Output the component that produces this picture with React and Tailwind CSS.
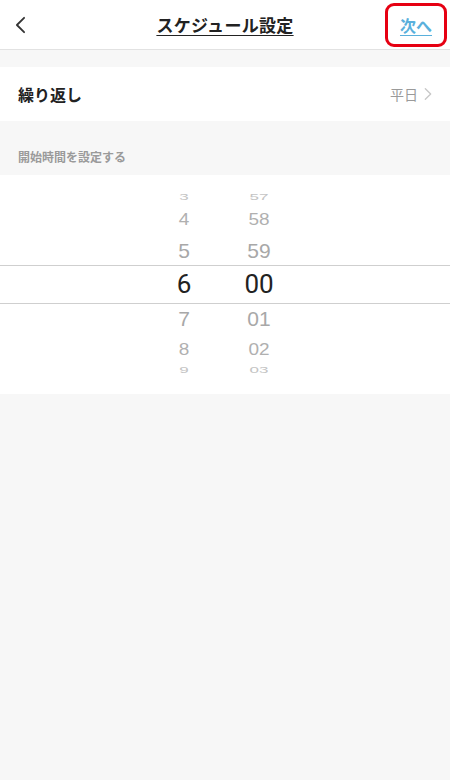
const font = { fontFamily: '"Noto Sans CJK JP", "Noto Sans", sans-serif' };
const digits = { fontFamily: '"Liberation Sans", Arial, sans-serif' };
const digitsMid = { fontFamily: 'Roboto, "Liberation Sans", sans-serif' };

function Chevron({ className }) {
  return (
    <svg viewBox="0 0 12 20" className={className} fill="none" stroke="currentColor" strokeWidth="2" strokeLinecap="round" strokeLinejoin="round">
      <path d="M10 2 L2 10 L10 18" />
    </svg>
  );
}

function PickerColumn({ values, width, rows }) {
  return (
    <div className={`flex flex-col items-center ${width}`}>
      {values.map((v, i) => (
        <div key={v} className={`flex items-center justify-center leading-none ${rows[i]}`} style={i === 3 ? digitsMid : digits}>
          {v}
        </div>
      ))}
    </div>
  );
}

export default function App() {
  const hours = ['3', '4', '5', '6', '7', '8', '9'];
  const mins = ['57', '58', '59', '00', '01', '02', '03'];

  // row styles from top to bottom of the wheel
  const rows = [
    'h-[15px] text-[17px] text-[#c4c4c4] scale-y-[0.5]',
    'h-[29px] text-[19px] text-[#b0b0b0] scale-y-[0.82]',
    'h-[32px] text-[21px] text-[#a8a8a8]',
    'h-[36px] text-[26px] text-[#222] font-normal',
    'h-[33px] text-[21px] text-[#a8a8a8]',
    'h-[28px] text-[19px] text-[#b0b0b0] scale-y-[0.82]',
    'h-[15px] text-[17px] text-[#c4c4c4] scale-y-[0.5]',
  ];

  return (
    <div className="min-h-[780px] bg-[#f7f7f7]" style={font}>
      <div className="relative flex h-[50px] items-center justify-center border-b border-[#e2e2e2] bg-white">
        <Chevron className="absolute left-[15px] top-[16px] h-[18px] w-[11px] text-[#333]" />
        <span className="text-[17px] font-bold tracking-[0.3px] text-[#222] underline underline-offset-[3px]">スケジュール設定</span>
        <div className="absolute right-[3px] top-[3px] flex h-[44px] w-[62px] items-center justify-center rounded-[9px] border-[3px] border-[#e60012]">
          <span className="text-[16px] font-bold text-[#5ab0dc] underline underline-offset-[3px]">次へ</span>
        </div>
      </div>

      <div className="mt-[17px] flex h-[54px] items-center justify-between bg-white pl-[18px] pr-[18px]">
        <span className="text-[16px] font-bold text-[#222]">繰り返し</span>
        <div className="flex items-center gap-[6px]">
          <span className="text-[14px] text-[#9a9a9a]">平日</span>
          <Chevron className="h-[14px] w-[8px] rotate-180 text-[#c8c8c8]" />
        </div>
      </div>

      <div className="flex h-[54px] items-end pb-[9px] pl-[18px]">
        <span className="text-[12px] font-bold text-[#9a9a9a]">開始時間を設定する</span>
      </div>

      <div className="bg-white pt-[15px] pb-[16px]">
        <div className="relative flex flex-col">
          <div className="flex justify-center gap-[30px] pr-[2px]">
            <PickerColumn values={hours} width="w-[40px]" rows={rows} />
            <PickerColumn values={mins} width="w-[50px]" rows={rows} />
          </div>
          <div className="pointer-events-none absolute left-0 right-0 top-[75px] h-[39px] border-y border-[#cfcfcf]" />
        </div>
      </div>
    </div>
  );
}
